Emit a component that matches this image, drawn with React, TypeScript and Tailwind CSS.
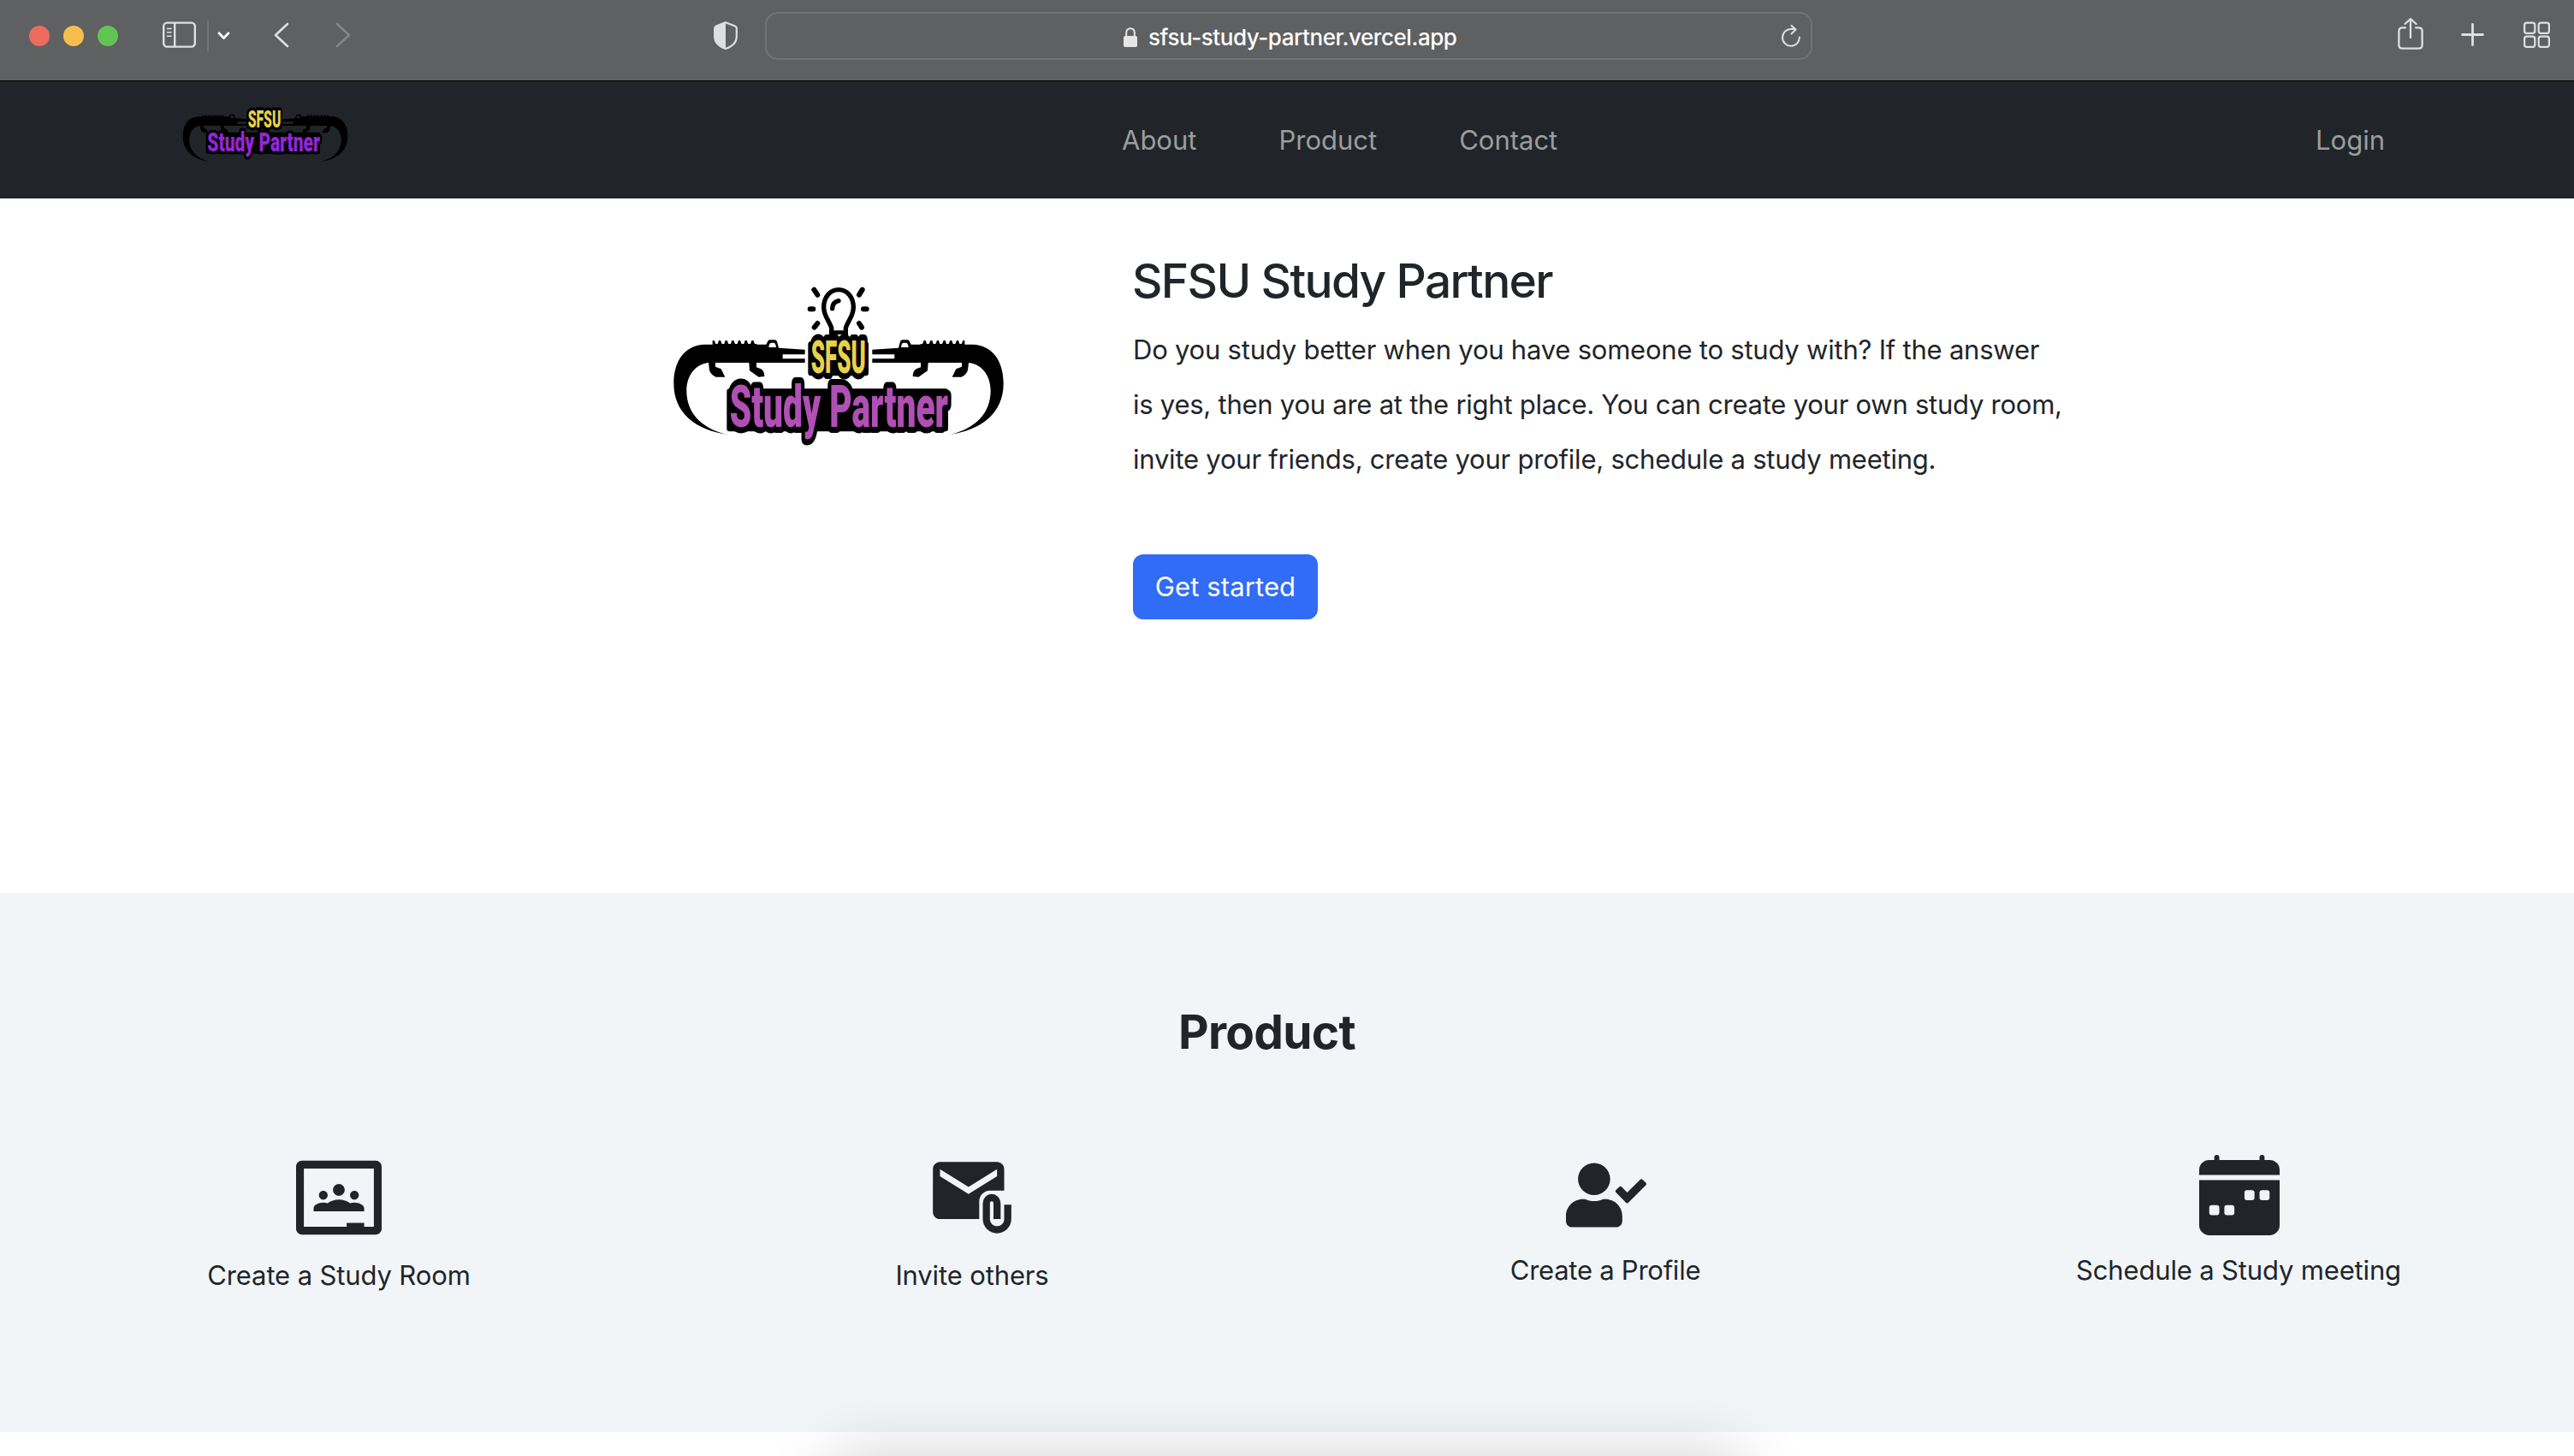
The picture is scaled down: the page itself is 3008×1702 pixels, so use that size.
import React from 'react';
import type { ReactNode } from 'react';
import { SiGoogleclassroom } from 'react-icons/si';
import { MdAttachEmail } from 'react-icons/md';
import { FaUserCheck } from 'react-icons/fa';
import { BsFillCalendarWeekFill } from 'react-icons/bs';

type LogoText = { y: number; size: number; x: number; width: number };

/* One end of the backpack handle; the right end is the same drawing mirrored. */
function Strap({ gap }: { gap: string }) {
  return (
    <g>
      <path
        d="M240 564 C130 548 52 490 52 385 C52 300 95 250 160 248 L188 248 L188 234 L194 234 L199 246 L206 246 L210 234 L216 234 L221 246 L229 246 L233 234 L239 234 L244 246 L252 246 L256 234 L262 234 L267 246 L275 246 L279 234 L285 234 L290 246 L298 246 L302 234 L308 234 L313 246 L321 246 L325 234 L331 234 L336 246 L343 246 L343 248 L376 248 L382 236 Q384 232 390 232 L406 232 Q412 232 414 238 L420 260 L512 266 L512 283 L434 283 L434 298 L512 298 L512 312 L342 312 L342 328 L358 334 Q370 342 370 360 L350 362 L318 340 L316 312 L198 312 L198 326 L218 334 L232 362 L200 362 Q176 352 176 330 L174 312 C125 318 97 360 97 410 C97 480 140 540 240 564 Z"
        fill="#000"
      />
      <path d="M386 252 q2 -10 8 -10 h8 q6 0 8 10 l1 6 h-26 z" fill={gap} />
    </g>
  );
}

function Logo({ className, purple, gap, bulb, top, bottom }: { className: string; purple: string; gap: string; bulb: boolean; top: LogoText; bottom: LogoText }) {
  return (
    <svg viewBox="0 0 1260 630" className={className} fontFamily="Roboto, sans-serif" fontWeight={900} strokeLinejoin="round">
      <Strap gap={gap} />
      <g transform="translate(1260 0) scale(-1 1)">
        <Strap gap={gap} />
      </g>
      {bulb && (
        <g fill="none" stroke="#000" strokeLinecap="round">
          <path d="M605 215 V190 C598 165 578 150 578 118 C578 82 600 56 630 56 C660 56 682 82 682 118 C682 150 662 165 655 190 V215" strokeWidth="16" />
          <path d="M608 122 Q608 100 630 95" strokeWidth="16" />
          <path d="M605 206 H655" strokeWidth="14" />
          <path d="M544 56 L556 74 M530 124 H541 M545 188 L556 174 M713 56 L702 74 M717 124 H728 M711 188 L702 174" strokeWidth="18" />
        </g>
      )}
      {/* Solid backing behind the lettering */}
      <path d={`M${top.x} ${top.y - 100} h${top.width} v100 h-${top.width} z M${bottom.x} ${bottom.y - 125} h${bottom.width - 10} v130 h-${bottom.width - 10} z`} fill="#000" stroke="#000" strokeWidth="20" />
      <g stroke="#000" strokeWidth="42" paintOrder="stroke">
        <text x={bottom.x} y={bottom.y} fontSize={bottom.size} textLength={bottom.width} lengthAdjust="spacingAndGlyphs" fill={purple}>Study Partner</text>
        <text x={top.x} y={top.y} fontSize={top.size} textLength={top.width} lengthAdjust="spacingAndGlyphs" fill="#e8d14b">SFSU</text>
      </g>
    </svg>
  );
}

function Toolbar() {
  return (
    <header className="flex h-[95px] items-start border-b border-black bg-[#5f6061] text-[#dedfe1]">
      <div className="ml-[34px] mt-[30px] flex gap-4">
        <span className="size-6 rounded-full bg-[#ed6a5e]" />
        <span className="size-6 rounded-full bg-[#f5bf4f]" />
        <span className="size-6 rounded-full bg-[#61c554]" />
      </div>
      <svg className="ml-[52px] mt-[25px] h-[31px] w-[39px]" viewBox="0 0 39 31" fill="none" stroke="currentColor" strokeWidth="2.4">
        <rect x="1.2" y="1.6" width="36.6" height="28" rx="4" />
        <path d="M14.2 2V29" />
        <path d="M5.5 8.5h4.5M5.5 12.8h4.5M5.5 17.3h4.5" strokeWidth="1.6" strokeLinecap="round" />
      </svg>
      <span className="ml-[13px] mt-6 h-9 w-0.5 bg-[#737475]" />
      <svg className="ml-2.5 mt-[36px] h-[11px] w-[15px] text-white" viewBox="0 0 15 11" fill="none" stroke="currentColor" strokeWidth="2.8" strokeLinecap="round" strokeLinejoin="round">
        <path d="M2 2.8 L7.5 8.4 L13 2.8" />
      </svg>
      <svg className="ml-[51px] mt-[26px] h-[30px] w-[18px]" viewBox="0 0 18 30" fill="none" stroke="currentColor" strokeWidth="2.6" strokeLinecap="round" strokeLinejoin="round">
        <path d="M16 2 L2 15 L16 28" />
      </svg>
      <svg className="ml-[54px] mt-[26px] h-[30px] w-[18px] text-[#858687]" viewBox="0 0 18 30" fill="none" stroke="currentColor" strokeWidth="2.6" strokeLinecap="round" strokeLinejoin="round">
        <path d="M2 2 L16 15 L2 28" />
      </svg>
      <svg className="ml-[424px] mt-[25px] h-[33px] w-7" viewBox="0 0 28 33">
        <path d="M14 1.2 L25 5.6 Q26.8 6.4 26.8 8.2 V18 C26.8 25 21 29.5 14 32 C7 29.5 1.2 25 1.2 18 V8.2 Q1.2 6.4 3 5.6 Z" fill="none" stroke="currentColor" strokeWidth="2.2" />
        <path d="M14 1.2 L3 5.6 Q1.2 6.4 1.2 8.2 V18 C1.2 25 7 29.5 14 32 Z" fill="currentColor" />
      </svg>
      <div className="ml-8 mt-3.5 flex h-14 w-[1224px] items-center rounded-[15px] border-2 border-[#727374]">
        <svg className="ml-[417px] mt-[3px] h-[23px] w-4" viewBox="0 0 16 23">
          <path d="M3.2 11V6.4C3.2 3.3 5 1.2 8 1.2s4.8 2.1 4.8 5.2V11" fill="none" stroke="#e6e6e6" strokeWidth="2" />
          <rect x="0" y="10" width="16" height="13" rx="2" fill="#e6e6e6" />
        </svg>
        <span className="ml-[13px] mt-1 text-[26px] leading-8 font-medium tracking-[-0.44px] whitespace-nowrap text-white">sfsu-study-partner.vercel.app</span>
        <svg className="mr-3 ml-auto h-[26px] w-[22px]" viewBox="0 0 22 26" fill="none" stroke="currentColor" strokeWidth="2" strokeLinecap="round" strokeLinejoin="round">
          <path d="M20.8 14.5 A9.9 9.9 0 1 1 11 5 H16" />
          <path d="M11.5 1 L16.5 5.6 L11.5 10.5" />
        </svg>
      </div>
      <svg className="ml-[684px] mt-5 h-[39px] w-[30px]" viewBox="0 0 30 39" fill="none" stroke="currentColor" strokeWidth="2.3" strokeLinecap="round" strokeLinejoin="round">
        <path d="M9 12.3 H5.5 Q1.4 12.3 1.4 16.4 V32.6 Q1.4 36.7 5.5 36.7 H24.5 Q28.6 36.7 28.6 32.6 V16.4 Q28.6 12.3 24.5 12.3 H21" />
        <path d="M15 24 V2.5 M8.5 8 L15 2 L21.5 8" />
      </svg>
      <svg className="ml-11 mt-[27px] size-[27px]" viewBox="0 0 27 27" stroke="currentColor" strokeWidth="2.8" strokeLinecap="round">
        <path d="M1.5 13.5 H25.5 M13.5 1.5 V25.5" />
      </svg>
      <svg className="ml-[46px] mt-[25px] size-[31px]" viewBox="0 0 31 31" fill="none" stroke="currentColor" strokeWidth="2.2">
        <rect x="1.1" y="1.6" width="12.2" height="12.2" rx="2.6" />
        <rect x="17.7" y="1.6" width="12.2" height="12.2" rx="2.6" />
        <rect x="1.1" y="17.7" width="12.2" height="12.2" rx="2.6" />
        <rect x="17.7" y="17.7" width="12.2" height="12.2" rx="2.6" />
      </svg>
    </header>
  );
}

function NavBar() {
  return (
    <nav className="flex h-[137px] items-center bg-[#212529] pt-px text-[31px] text-[#9b9d9f]">
      <Logo
        className="-mt-px ml-[205px] h-[105px] w-[210px] self-start overflow-visible"
        purple="#9425d8"
        gap="#212529"
        bulb={false}
        top={{ x: 508, y: 324, size: 166, width: 232 }}
        bottom={{ x: 224, y: 494, size: 188, width: 790 }}
      />
      <a className="ml-[896px]">About</a>
      <a className="ml-[96px]">Product</a>
      <a className="ml-[96px]">Contact</a>
      <a className="mr-[221px] ml-auto">Login</a>
    </nav>
  );
}

function Hero() {
  return (
    <section className="flex h-[812px] items-start bg-white">
      <Logo
        className="ml-[770px] mt-[88px] h-[210px] w-[420px] shrink-0 overflow-visible"
        purple="#b04fb4"
        gap="#ffffff"
        bulb
        top={{ x: 533, y: 348, size: 160, width: 192 }}
        bottom={{ x: 248, y: 538, size: 204, width: 766 }}
      />
      <div className="ml-[134px] mt-[63px] flex flex-col items-start whitespace-nowrap">
        <h2 className="-ml-px text-[55px] leading-[66px] font-medium tracking-[-1.66px]">SFSU Study Partner</h2>
        <p className="mt-4 text-[31px] leading-[64px]">
          <span className="block tracking-[-0.22px]">Do you study better when you have someone to study with? If the answer</span>
          <span className="block tracking-[-0.25px]">is yes, then you are at the right place. You can create your own study room,</span>
          <span className="block tracking-[-0.226px]">invite your friends, create your profile, schedule a study meeting.</span>
        </p>
        <button className="mt-[79px] h-[76px] w-[216px] rounded-xl bg-[#306cf6] pt-px text-[31px] tracking-[0.1px] text-white">Get started</button>
      </div>
    </section>
  );
}

function Feature({ icon, children }: { icon: ReactNode; children: ReactNode }) {
  return (
    <div className="flex w-[740px] flex-col items-center gap-[17px]">
      {icon}
      {children}
    </div>
  );
}

function Product() {
  return (
    <section className="h-[630px] bg-[#f1f5f8] pt-[129px]">
      <h2 className="ml-[1377px] text-[55px] leading-[66px] font-bold tracking-[-0.7px]">Product</h2>
      <div className="mt-[111px] ml-[26px] flex text-[31px] leading-[48px] whitespace-nowrap">
        <Feature icon={<SiGoogleclassroom className="size-[100px]" />}>
          <span className="tracking-[-0.13px]">Create a Study Room</span>
        </Feature>
        <Feature icon={<MdAttachEmail className="size-[100px]" />}>
          <span className="tracking-[-0.13px]">Invite others</span>
        </Feature>
        <Feature icon={<FaUserCheck className="ml-0.5 size-[94px]" />}>
          <span className="tracking-[-0.25px]">Create a Profile</span>
        </Feature>
        <Feature icon={<BsFillCalendarWeekFill className="ml-0.5 size-[94px]" />}>
          <span className="tracking-[-0.157px]">Schedule a Study meeting</span>
        </Feature>
      </div>
    </section>
  );
}

export default function App() {
  return (
    <div className="relative h-[1702px] w-[3008px] overflow-hidden bg-white font-[Inter,sans-serif] text-[#212529]">
      <Toolbar />
      <NavBar />
      <Hero />
      <Product />
      <div className="absolute top-full left-[976px] h-20 w-[1056px] shadow-[0_0_80px_rgba(0,0,0,0.19)]" />
    </div>
  );
}
